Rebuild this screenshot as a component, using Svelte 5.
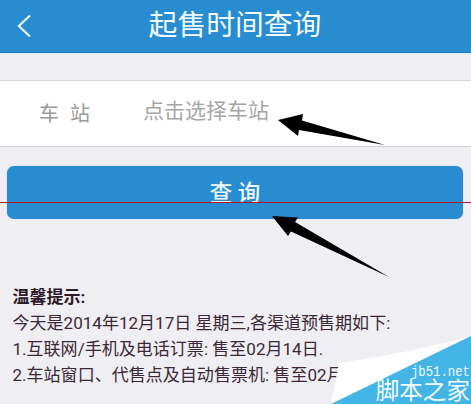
<script>
  let title = '起售时间查询';
  let placeholder = '点击选择车站';

  const notes = [
    '今天是2014年12月17日 星期三,各渠道预售期如下:',
    '1.互联网/手机及电话订票: 售至02月14日.',
    '2.车站窗口、代售点及自动售票机: 售至02月14日.'
  ];
</script>

<div class="page">
  <header class="header">
    <button type="button" class="header__back" aria-label="返回">
      <svg width="15" height="24" viewBox="0 0 15 24">
        <path d="M13 1.4 1.8 12 13 22.4" fill="none" stroke="#f2fcff" stroke-width="2.1" />
      </svg>
    </button>
    <h1 class="header__title">{title}</h1>
  </header>

  <div class="field">
    <span class="field__label"><span>车</span><span>站</span></span>
    <span class="field__value">{placeholder}</span>
  </div>

  <button type="button" class="submit">查 询</button>

  <section class="notes">
    <h2 class="notes__title">温馨提示:</h2>
    {#each notes as note}
      <p class="notes__line">{note}</p>
    {/each}
  </section>

  <!-- guide line and pointer arrows -->
  <svg class="marks" width="471" height="404" viewBox="0 0 471 404">
    <path d="M0 202.5H471" stroke="#b4152c" stroke-width="1" />
    <path d="M278 120 303 114 302 120.5 385 145 299 130 298 136Z" />
    <path d="M272 216 298 217.5 295 222 389 277 291 231.5 288 236Z" />
  </svg>

  <div class="watermark">
    <svg class="watermark__fold" width="140" height="68" viewBox="0 0 140 68">
      <path d="M0 68 8 27Q74 18 140 0Z" fill="#fff" />
      <path d="M0 68 140 0V68Z" fill="#42b4e6" />
    </svg>
    <div class="watermark__text">
      <span class="watermark__site">jb51.net</span>
      <span class="watermark__name">脚本之家</span>
    </div>
  </div>
</div>

<style>
  :global(body) {
    background: #efeef3;
  }

  .page {
    position: relative;
    width: 471px;
    height: 404px;
    overflow: hidden;
    background: #efeef3;
    font-family: Roboto, "Noto Sans CJK SC", sans-serif;
  }

  .header {
    display: grid;
    grid-template-columns: 48px 1fr 48px;
    align-items: center;
    height: 53px;
    box-sizing: border-box;
    background: #288cd0;
    border-bottom: 1px solid #2380c2;
    box-shadow: 0 1px 0 #d5ebf5;
  }

  .header__back {
    display: flex;
    padding: 0 0 0 17px;
    border: 0;
    background: none;
  }

  .header__title {
    margin: 0 1px 2px 0;
    color: #f2fcff;
    font-size: 28.8px;
    font-weight: 400;
    line-height: 44px;
    text-align: center;
  }

  .field {
    display: flex;
    align-items: center;
    height: 67px;
    box-sizing: border-box;
    margin-top: 27px;
    padding-left: 39px;
    background: #fff;
    border-top: 1px solid #d5d5da;
    border-bottom: 1px solid #cfcfd5;
    color: #999;
    line-height: 30px;
  }

  .field__label {
    display: flex;
    gap: 11px;
    width: 104px;
    font-size: 20px;
  }

  .field__value {
    margin-bottom: 5px;
    color: #a6a6a6;
    font-size: 21px;
  }

  .submit {
    display: block;
    width: 456px;
    height: 53px;
    margin: 19px 0 0 7px;
    padding: 0 0 3px;
    border: 0;
    border-radius: 7px;
    background: #288cd0;
    box-shadow: 0 0 1px #8bc6e8;
    color: #effaff;
    font-family: inherit;
    font-size: 22.5px;
    font-weight: 500;
  }

  .notes {
    margin: 65px 0 0 12.5px;
    color: #3a2835;
    font-size: 17.05px;
    line-height: 26px;
    white-space: nowrap;
  }

  .notes__title {
    margin: 0;
    color: #2d1a28;
    font-size: 17.05px;
    font-weight: 700;
  }

  .notes__line {
    margin: 0;
  }

  .marks {
    position: absolute;
    top: 0;
    left: 0;
    pointer-events: none;
  }

  .watermark {
    position: absolute;
    right: 0;
    bottom: 0;
    width: 140px;
    height: 68px;
  }

  .watermark__fold {
    display: block;
  }

  .watermark__text {
    position: absolute;
    right: 1px;
    bottom: 0;
    display: flex;
    flex-direction: column;
    align-items: flex-end;
    color: #f4fcff;
  }

  .watermark__site {
    font-family: "Liberation Mono", monospace;
    font-size: 12.3px;
    line-height: 14px;
    transform: scaleY(1.2);
  }

  .watermark__name {
    font-size: 23.6px;
    line-height: 25px;
  }
</style>
